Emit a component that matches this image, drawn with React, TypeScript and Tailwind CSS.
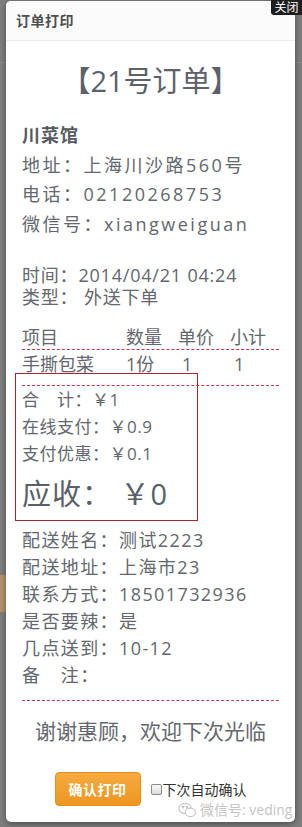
import React from "react";

const dash = "border-t border-dashed border-[#c43a4a]";

function Row({ label, value }: { label: string; value: string }) {
  return (
    <div className="leading-[27px] whitespace-nowrap">
      {label}
      {value}
    </div>
  );
}

export default function App() {
  return (
    <div
      className="relative w-[302px] h-[827px] overflow-hidden bg-[#7e7e7e] text-[#63676e]"
      style={{ fontFamily: '"Open Sans", "Noto Sans CJK SC", sans-serif' }}
    >
      {/* page behind the overlay */}
      <div className="absolute left-0 top-[575px] w-[8px] h-[37px] bg-[#b3926a]" />
      <div className="absolute left-0 top-[62px] w-[8px] h-[1px] bg-[#8c8c8c]" />
      <div className="absolute right-0 top-[62px] w-[8px] h-[1px] bg-[#8c8c8c]" />

      {/* modal */}
      <div className="relative ml-[6px] mt-[1px] w-[289px] h-[821px] rounded-[5px] bg-white shadow-[0_2px_6px_rgba(0,0,0,0.4)] flex flex-col">
        <div className="h-[40px] flex items-center px-[10px] border-b border-[#ececec] bg-[#fbfbfc] rounded-t-[5px]">
          <span className="text-[14px] font-bold text-[#4e4e4e] tracking-[0.5px]">订单打印</span>
        </div>

        <div className="px-[16px] flex flex-col">
          <div className="mt-[20px] text-center text-[29px] leading-[40px] text-[#5c616a]">【21号订单】</div>

          <div className="mt-[20px] text-[18px] leading-[29.5px] tracking-[2.5px]">
            <div className="font-bold tracking-[1px] text-[#555a61]">川菜馆</div>
            <div>地址：上海川沙路560号</div>
            <div>电话：02120268753</div>
            <div>微信号：xiangweiguan</div>
          </div>

          <div className="mt-[25px] text-[18px] leading-[22px] tracking-[0.8px]">
            <div>时间：2014/04/21 04:24</div>
            <div>类型： 外送下单</div>
          </div>

          <div className="mt-[17px] text-[18px]">
            <div className="flex leading-[24px]">
              <span className="w-[104px]">项目</span>
              <span className="w-[52px]">数量</span>
              <span className="w-[52px]">单价</span>
              <span>小计</span>
            </div>
            <div className={dash} />
            <div className="flex leading-[28px] pb-[7px]">
              <span className="w-[104px]">手撕包菜</span>
              <span className="w-[52px]">1份</span>
              <span className="w-[52px] pl-[4px]">1</span>
              <span className="pl-[4px]">1</span>
            </div>
            <div className={dash} />
          </div>

          <div className="text-[17px] tracking-[0.5px]">
            <Row label="合　计：" value="￥1" />
            <Row label="在线支付：" value="￥0.9" />
            <Row label="支付优惠：" value="￥0.1" />
            <div className="mt-[5px] text-[29px] leading-[44px] tracking-[1px] text-[#5a5f68]">应收： ￥0</div>
          </div>

          <div className="mt-[11px] text-[18px] tracking-[1.4px]">
            <Row label="配送姓名：" value="测试2223" />
            <Row label="配送地址：" value="上海市23" />
            <Row label="联系方式：" value="18501732936" />
            <Row label="是否要辣：" value="是" />
            <Row label="几点送到：" value="10-12" />
            <Row label="备　注：" value="" />
          </div>

          <div className={`mt-[11px] ${dash}`} />

          <div className="mt-[15px] text-center text-[21px] leading-[30px] text-[#64686e]">谢谢惠顾，欢迎下次光临</div>

          <div className="mt-[26px] flex items-center justify-center gap-[10px]">
            <button className="w-[86px] h-[34px] rounded-[4px] border border-[#e2901f] bg-gradient-to-b from-[#f6aa3e] to-[#ee961f] text-white text-[14px] font-bold tracking-[0.5px]">
              确认打印
            </button>
            <label className="flex items-center text-[14px] text-[#333]">
              <span className="inline-block w-[11px] h-[11px] border border-[#8a8a8a] rounded-[2px] bg-gradient-to-b from-[#fafafa] to-[#dcdcdc]" />
              <span className="ml-[1px]">下次自动确认</span>
            </label>
          </div>
        </div>

        {/* red annotation box */}
        <div className="absolute left-[9px] top-[372px] w-[183px] h-[148px] border border-[#b3202e]" />

        {/* watermark */}
        <div className="absolute left-[172px] top-[800px] flex items-center gap-[3px] text-[#c4c4c4] text-[14px] leading-[18px] whitespace-nowrap">
          <svg width="19" height="16" viewBox="0 0 20 17" fill="none" stroke="#c8c8c8" strokeWidth="1.2">
            <ellipse cx="7.5" cy="7" rx="6.5" ry="5.5" />
            <ellipse cx="13" cy="11" rx="5.5" ry="4.5" fill="white" />
            <circle cx="5.3" cy="5.5" r="0.8" fill="#c8c8c8" />
            <circle cx="9.5" cy="5.5" r="0.8" fill="#c8c8c8" />
          </svg>
          <span>微信号: veding</span>
        </div>
      </div>

      {/* close tab */}
      <div className="absolute right-0 top-0 w-[31px] h-[15px] rounded-bl-[3px] bg-[#1e1e1e] text-white text-[12px] leading-[15px] text-center whitespace-nowrap">
        关闭
      </div>
    </div>
  );
}
